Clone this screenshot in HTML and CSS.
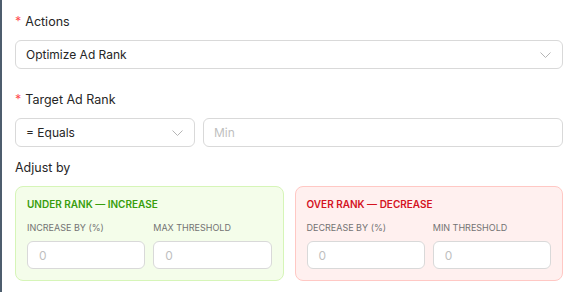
FILE: index.html
```html
<!DOCTYPE html>
<html lang="en">
<head>
  <meta charset="UTF-8" />
  <title>Ad Rank Rule</title>
  <link rel="stylesheet" href="styles.css">
</head>
<body>
  <div class="page">
    <div class="field">
      <label class="label"><span class="req">*</span>Actions</label>
      <div class="select">
        <span>Optimize Ad Rank</span>
        <svg class="chev" width="11" height="6" viewBox="0 0 11 6"><path d="M0.5 0.5 L5.5 5.5 L10.5 0.5" fill="none" stroke="#b5b5b5" stroke-width="1"/></svg>
      </div>
    </div>

    <div class="field">
      <label class="label"><span class="req">*</span>Target Ad Rank</label>
      <div class="row">
        <div class="select">
          <span>= Equals</span>
          <svg class="chev" width="11" height="6" viewBox="0 0 11 6"><path d="M0.5 0.5 L5.5 5.5 L10.5 0.5" fill="none" stroke="#b5b5b5" stroke-width="1"/></svg>
        </div>
        <div class="input placeholder">Min</div>
      </div>
    </div>

    <div class="field">
      <label class="label">Adjust by</label>
      <div class="boxes">
        <div class="box box-up">
          <div class="box-title">UNDER RANK — INCREASE</div>
          <div class="box-grid">
            <div>
              <div class="small-label">INCREASE BY (%)</div>
              <div class="input small placeholder">0</div>
            </div>
            <div>
              <div class="small-label">MAX THRESHOLD</div>
              <div class="input small placeholder">0</div>
            </div>
          </div>
        </div>
        <div class="box box-down">
          <div class="box-title">OVER RANK — DECREASE</div>
          <div class="box-grid">
            <div>
              <div class="small-label">DECREASE BY (%)</div>
              <div class="input small placeholder">0</div>
            </div>
            <div>
              <div class="small-label">MIN THRESHOLD</div>
              <div class="input small placeholder">0</div>
            </div>
          </div>
        </div>
      </div>
    </div>
  </div>
</body>
</html>
```
FILE: styles.css
```css
* {
  box-sizing: border-box;
}
body {
  margin: 0;
  font-family: Inter, "Noto Sans", sans-serif;
  color: #262626;
  background: #fff;
}
.page {
  border-left: 2px solid #4d5d6d;
  min-height: 292px;
  padding: 13px 14px 0 13px;
}
.field {
  margin-bottom: 22px;
}
.field:nth-child(2) {
  margin-bottom: 12px;
}
.label {
  display: block;
  font-size: 12.5px;
  line-height: 18px;
  margin-bottom: 9px;
}
.req {
  color: #ff4d4f;
  margin-right: 4px;
}
.select,
.input {
  height: 29px;
  border: 1px solid #d9d9d9;
  border-radius: 6px;
  padding: 0 11px 0 10px;
  font-size: 12px;
  display: flex;
  align-items: center;
  justify-content: space-between;
  background: #fff;
}
.placeholder {
  color: #bfbfbf;
}
.row {
  display: grid;
  grid-template-columns: 180px 1fr;
  gap: 8px;
}
.boxes {
  display: grid;
  grid-template-columns: 1fr 1fr;
  gap: 11px;
}
.box {
  border-radius: 8px;
  border: 1px solid;
  padding: 9px 11px 11px;
  height: 95px;
}
.box-up {
  background: #f4fdea;
  border-color: #d6f5b8;
}
.box-down {
  background: #fff0ef;
  border-color: #ffc8c4;
}
.box-title {
  font-size: 10px;
  font-weight: 600;
  line-height: 16px;
  margin-bottom: 9px;
}
.box-up .box-title {
  color: #389e0d;
}
.box-down .box-title {
  color: #d4131f;
}
.box-grid {
  display: grid;
  grid-template-columns: 1fr 1fr;
  gap: 8px;
}
.small-label {
  font-size: 9px;
  line-height: 14px;
  color: #737373;
  margin-bottom: 6px;
}
.input.small {
  height: 28px;
  padding-left: 11px;
}
```
